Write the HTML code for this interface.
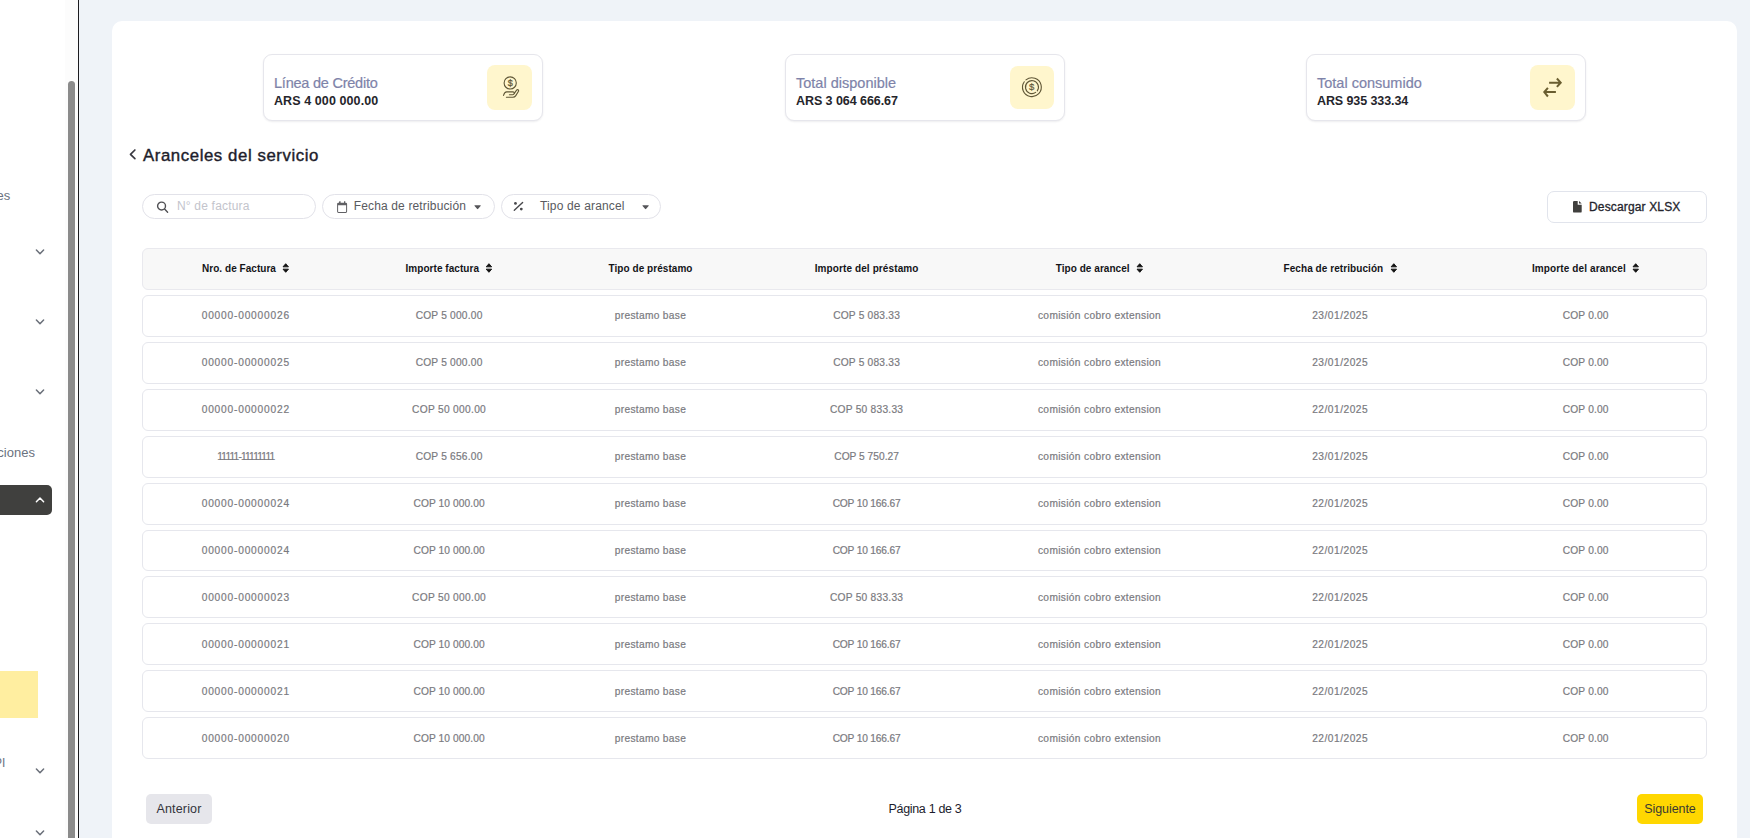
<!DOCTYPE html>
<html lang="es">
<head>
<meta charset="utf-8">
<title>Aranceles del servicio</title>
<style>
*{box-sizing:border-box;margin:0;padding:0}
html,body{width:1750px;height:838px;overflow:hidden}
body{background:#eff3f8;font-family:"Liberation Sans",sans-serif;position:relative;color:#222}
.abs{position:absolute}
/* sidebar */
#side{position:absolute;left:0;top:0;width:79px;height:838px;background:#fff;border-right:1px solid #1b1b1f;overflow:hidden}
#track{position:absolute;left:65px;top:0;width:13px;height:838px;background:#fcfcfc}
#thumb{position:absolute;left:68px;top:81px;width:7px;height:800px;border-radius:4px;background:#8b8b8b}
.nt{position:absolute;left:0;font-size:13px;color:#6b7280;white-space:nowrap;line-height:16px}
.chev{position:absolute;left:35px;width:10px;height:6px;fill:none;stroke:#6a6f79;stroke-width:1.5;stroke-linecap:round;stroke-linejoin:round;overflow:visible}
#dark{position:absolute;left:-6px;top:485px;width:58px;height:30px;border-radius:5px;background:#40403e}
#yellow{position:absolute;left:0;top:671px;width:38px;height:47px;background:#ffeea0}
/* main */
#panel{position:absolute;left:112px;top:21px;width:1625px;height:830px;background:#fff;border-radius:10px}
.card{position:absolute;top:54px;width:280px;height:67px;background:#fff;border:1px solid #e6e6ec;border-radius:9px;box-shadow:0 1px 2px rgba(20,20,50,.08)}
.card .lab{position:absolute;left:10px;top:18.8px;font-size:14.5px;line-height:18px;color:#7e83a9;white-space:nowrap;-webkit-text-stroke:.2px #7e83a9}
.card .val{position:absolute;left:10px;top:39px;font-size:12.5px;line-height:15px;font-weight:700;color:#25252b;white-space:nowrap}
.card .ib{position:absolute;left:223px;top:10px;width:45px;height:44.5px;border-radius:8px;background:#fff6cd}
.card svg{position:absolute;overflow:visible}
#title{position:absolute;left:143px;top:144.6px;font-size:16.8px;line-height:22px;color:#1d1d2b;white-space:nowrap;letter-spacing:.58px;-webkit-text-stroke:.4px #1d1d2b}
.pill{position:absolute;top:194px;height:25px;border:1px solid #e2e2e9;border-radius:13px;background:#fff}
.pill span{position:absolute;top:4px;font-size:12px;line-height:14px;white-space:nowrap;color:#595a60}
.pill svg{position:absolute;overflow:visible}
#dl{position:absolute;left:1547px;top:191px;width:160px;height:32px;border:1px solid #e1e4ec;border-radius:7px;background:#fff}
#dl span{position:absolute;left:41px;top:7.5px;font-size:12px;line-height:14px;color:#24242c;white-space:nowrap;letter-spacing:.15px;-webkit-text-stroke:.3px #24242c}
.tr{position:absolute;left:142px;width:1565px;height:42px;border:1px solid #e6e7ed;border-radius:6px;background:#fff}
.tr.h{background:#f8f8f8;border-color:#e9e9ee}
.c{position:absolute;top:0;height:39px;line-height:39px;text-align:center;white-space:nowrap;font-size:10.2px;color:#7a7a80;transform:translateX(-50%);-webkit-text-stroke:.2px #7a7a80}
.o1 .c{top:1px}
.h .c{font-size:10px;font-weight:700;color:#141418;-webkit-text-stroke:0}
.sort{display:inline-block;width:7px;height:10px;margin-left:6.6px;vertical-align:-1.3px;fill:#111;stroke:#111;stroke-width:.9;stroke-linejoin:round}
.c1{left:102.8px;letter-spacing:.8px}.c2{left:306.1px;letter-spacing:.21px}.c3{left:507.5px;letter-spacing:.3px}.c4{left:723.6px;letter-spacing:.21px}.c5{left:956.5px;letter-spacing:.34px}.c6{left:1197.2px;letter-spacing:.5px}.c7{left:1442.7px;letter-spacing:.18px}
.btn{position:absolute;top:794px;height:30px;border-radius:5px;font-size:12.5px;line-height:30px;text-align:center;white-space:nowrap}
</style>
</head>
<body>
<div id="side">
  <div id="track"></div><div id="thumb"></div>
  <div class="nt" style="top:188px;left:-42.5px">Reportes</div>
  <div class="nt" style="top:445px;left:-46px">Notificaciones</div>
  <div class="nt" style="top:755px;left:-14px;font-size:12px">API</div>
  <svg class="chev" style="top:249px" viewBox="0 0 10 6"><path d="M1.4 1 L5 4.7 L8.6 1"/></svg>
  <svg class="chev" style="top:319px" viewBox="0 0 10 6"><path d="M1.4 1 L5 4.7 L8.6 1"/></svg>
  <svg class="chev" style="top:389px" viewBox="0 0 10 6"><path d="M1.4 1 L5 4.7 L8.6 1"/></svg>
  <div id="dark"></div>
  <svg class="chev" style="top:496.5px;stroke:#fff" viewBox="0 0 10 6"><path d="M1.4 4.7 L5 1 L8.6 4.7"/></svg>
  <div id="yellow"></div>
  <svg class="chev" style="top:768px" viewBox="0 0 10 6"><path d="M1.4 1 L5 4.7 L8.6 1"/></svg>
  <svg class="chev" style="top:830px" viewBox="0 0 10 6"><path d="M1.4 1 L5 4.7 L8.6 1"/></svg>
</div>
<div id="panel"></div>
<div class="card" style="left:263px"><div class="lab" style="letter-spacing:-0.23px">Línea de Crédito</div><div class="val" style="letter-spacing:0.09px">ARS 4 000 000.00</div><div class="ib" style=""><svg width="45" height="45" viewBox="0 0 45 45" style="left:0;top:0" fill="none" stroke="#5f5636" stroke-width="1.1" stroke-linecap="round" stroke-linejoin="round"><circle cx="23.2" cy="17.95" r="6.1"/><text x="23.15" y="20.9" text-anchor="middle" font-family="Liberation Sans, sans-serif" font-size="9" fill="#5f5636" stroke="#5f5636" stroke-width=".25">$</text><path d="M16.5 30.4 Q17.6 26.9 19.6 26.9 L25.8 26.9 Q27.6 27.1 27.3 28.4 Q27 29.7 25.6 29.7 L22.4 29.7"/><path d="M19.4 32.3 L25.8 32.3 Q27.8 32.2 28.8 30.6 L31.5 26.3 Q31.9 25.2 31 24.7 Q30.2 24.4 29.6 25.2 L27.3 28.4"/></svg></div></div>
<div class="card" style="left:785px"><div class="lab" style="letter-spacing:0.01px">Total disponible</div><div class="val" style="letter-spacing:-0.06px">ARS 3 064 666.67</div><div class="ib" style="left:224px;top:10.7px;width:44.4px;height:43.6px"><svg width="45" height="45" viewBox="0 0 45 45" style="left:0;top:0" fill="none" stroke="#5f5636" stroke-width="1.1" stroke-linecap="round"><path d="M15.98 13.94 A9.4 9.4 0 1 1 14.3 15.72"/><path d="M25.68 26.42 A6.5 6.5 0 1 1 27.27 24.83"/><text x="21.75" y="24.2" text-anchor="middle" font-family="Liberation Sans, sans-serif" font-size="9.6" fill="#5f5636" stroke="#5f5636" stroke-width=".15">$</text></svg></div></div>
<div class="card" style="left:1306px"><div class="lab" style="letter-spacing:0px">Total consumido</div><div class="val" style="letter-spacing:-0.09px">ARS 935 333.34</div><div class="ib" style=""><svg width="45" height="45" viewBox="0 0 45 45" style="left:0;top:0" fill="none" stroke="#6a5e30" stroke-width="2" stroke-linejoin="miter"><path d="M19.1 17.7 L30 17.7 M26.9 13.5 L30.7 17.7 L26.9 21.9"/><path d="M25.9 27.1 L15 27.1 M17.9 22.9 L14.3 27.1 L17.9 31.5"/></svg></div></div>
<svg class="abs" style="left:129px;top:149.3px;overflow:visible" width="8" height="11" viewBox="0 0 8 11"><path d="M5.9 1 L1.5 5.3 L5.9 9.6" fill="none" stroke="#3a3a42" stroke-width="1.7" stroke-linecap="round" stroke-linejoin="round"/></svg>
<div id="title">Aranceles del servicio</div>
<div class="pill" style="left:142px;width:174px"><svg style="left:13px;top:5.5px" width="13" height="13" viewBox="0 0 13 13" fill="none" stroke="#505054" stroke-width="1.4" stroke-linecap="round"><circle cx="5.55" cy="5.05" r="3.95"/><path d="M8.6 8.1 L11.6 11.2"/></svg><span style="left:34px;color:#c3c4cc;letter-spacing:.19px">N° de factura</span></div>
<div class="pill" style="left:322px;width:173px"><svg style="left:14px;top:5.8px" width="11" height="13" viewBox="0 0 11 13"><path d="M2.3 0.2 h1.3 v1.5 h3.4 v-1.5 h1.3 v1.5 h0.5 a1.3 1.3 0 0 1 1.3 1.3 v7.6 a1.3 1.3 0 0 1 -1.3 1.3 h-7.4 a1.3 1.3 0 0 1 -1.3 -1.3 v-7.6 a1.3 1.3 0 0 1 1.3 -1.3 h0.5 z M1.1 4.3 v6.2 a0.4 0.4 0 0 0 0.4 0.4 h7.2 a0.4 0.4 0 0 0 0.4 -0.4 v-6.2 z" fill="#606064" fill-rule="evenodd"/></svg><svg style="left:151px;top:10px" width="8" height="5" viewBox="0 0 8 5"><path d="M0.9 0.2 h5.4 q0.9 0 0.3 0.75 l-2.4 2.9 q-0.6 0.6 -1.2 0 l-2.4 -2.9 q-0.6 -0.75 0.3 -0.75 z" fill="#555559"/></svg><span style="left:30.7px;letter-spacing:.15px">Fecha de retribución</span></div>
<div class="pill" style="left:501px;width:160px"><svg style="left:11px;top:5.4px" width="12" height="12" viewBox="0 0 12 12"><path d="M1.3 10.2 L9.6 2.4" stroke="#48484c" stroke-width="1.4" stroke-linecap="round"/><circle cx="2.45" cy="3.4" r="1.4" fill="#48484c"/><circle cx="8.3" cy="9.1" r="1.4" fill="#48484c"/></svg><svg style="left:139.8px;top:10px" width="8" height="5" viewBox="0 0 8 5"><path d="M0.9 0.2 h5.4 q0.9 0 0.3 0.75 l-2.4 2.9 q-0.6 0.6 -1.2 0 l-2.4 -2.9 q-0.6 -0.75 0.3 -0.75 z" fill="#555559"/></svg><span style="left:38px;letter-spacing:.16px">Tipo de arancel</span></div>
<div id="dl"><svg style="position:absolute;left:25.2px;top:9px;overflow:visible" width="9" height="12" viewBox="0 0 9 12"><path d="M1.2 0 H4.7 V3.7 H8.7 V10.4 A1.2 1.2 0 0 1 7.5 11.6 H1.2 A1.2 1.2 0 0 1 0 10.4 V1.2 A1.2 1.2 0 0 1 1.2 0 Z M6 0 L8.7 2.6 H6 Z" fill="#403f3d"/></svg><span>Descargar XLSX</span></div>
<div class="tr h" style="top:248px"><div class="c c1" style="letter-spacing:0.04px">Nro. de Factura<svg class="sort" viewBox="0 0 7 10"><path d="M3.5 0.7 L6.25 3.85 L0.75 3.85 Z M0.75 6.15 L6.25 6.15 L3.5 9.3 Z"/></svg></div><div class="c c2" style="letter-spacing:0.05px">Importe factura<svg class="sort" viewBox="0 0 7 10"><path d="M3.5 0.7 L6.25 3.85 L0.75 3.85 Z M0.75 6.15 L6.25 6.15 L3.5 9.3 Z"/></svg></div><div class="c c3" style="letter-spacing:0.05px">Tipo de préstamo</div><div class="c c4" style="letter-spacing:0.11px">Importe del préstamo</div><div class="c c5" style="letter-spacing:0.05px">Tipo de arancel<svg class="sort" viewBox="0 0 7 10"><path d="M3.5 0.7 L6.25 3.85 L0.75 3.85 Z M0.75 6.15 L6.25 6.15 L3.5 9.3 Z"/></svg></div><div class="c c6" style="letter-spacing:0.07px">Fecha de retribución<svg class="sort" viewBox="0 0 7 10"><path d="M3.5 0.7 L6.25 3.85 L0.75 3.85 Z M0.75 6.15 L6.25 6.15 L3.5 9.3 Z"/></svg></div><div class="c c7" style="letter-spacing:0.12px">Importe del arancel<svg class="sort" viewBox="0 0 7 10"><path d="M3.5 0.7 L6.25 3.85 L0.75 3.85 Z M0.75 6.15 L6.25 6.15 L3.5 9.3 Z"/></svg></div></div>
<div class="tr" style="top:295px;height:42px"><div class="c c1">00000-00000026</div><div class="c c2">COP 5 000.00</div><div class="c c3">prestamo base</div><div class="c c4">COP 5 083.33</div><div class="c c5">comisión cobro extension</div><div class="c c6">23/01/2025</div><div class="c c7">COP 0.00</div></div>
<div class="tr" style="top:342px;height:42px"><div class="c c1">00000-00000025</div><div class="c c2">COP 5 000.00</div><div class="c c3">prestamo base</div><div class="c c4">COP 5 083.33</div><div class="c c5">comisión cobro extension</div><div class="c c6">23/01/2025</div><div class="c c7">COP 0.00</div></div>
<div class="tr" style="top:389px;height:42px"><div class="c c1">00000-00000022</div><div class="c c2" style="letter-spacing:.3px">COP 50 000.00</div><div class="c c3">prestamo base</div><div class="c c4" style="letter-spacing:.25px">COP 50 833.33</div><div class="c c5">comisión cobro extension</div><div class="c c6">22/01/2025</div><div class="c c7">COP 0.00</div></div>
<div class="tr" style="top:436px;height:42px"><div class="c c1" style="letter-spacing:-.83px">11111-11111111</div><div class="c c2">COP 5 656.00</div><div class="c c3">prestamo base</div><div class="c c4" style="letter-spacing:.02px">COP 5 750.27</div><div class="c c5">comisión cobro extension</div><div class="c c6">23/01/2025</div><div class="c c7">COP 0.00</div></div>
<div class="tr" style="top:483px;height:42px"><div class="c c1">00000-00000024</div><div class="c c2" style="letter-spacing:.1px">COP 10 000.00</div><div class="c c3">prestamo base</div><div class="c c4" style="letter-spacing:-.17px">COP 10 166.67</div><div class="c c5">comisión cobro extension</div><div class="c c6">22/01/2025</div><div class="c c7">COP 0.00</div></div>
<div class="tr" style="top:530px;height:41px"><div class="c c1">00000-00000024</div><div class="c c2" style="letter-spacing:.1px">COP 10 000.00</div><div class="c c3">prestamo base</div><div class="c c4" style="letter-spacing:-.17px">COP 10 166.67</div><div class="c c5">comisión cobro extension</div><div class="c c6">22/01/2025</div><div class="c c7">COP 0.00</div></div>
<div class="tr o1" style="top:576px;height:42px"><div class="c c1">00000-00000023</div><div class="c c2" style="letter-spacing:.3px">COP 50 000.00</div><div class="c c3">prestamo base</div><div class="c c4" style="letter-spacing:.25px">COP 50 833.33</div><div class="c c5">comisión cobro extension</div><div class="c c6">22/01/2025</div><div class="c c7">COP 0.00</div></div>
<div class="tr o1" style="top:623px;height:42px"><div class="c c1">00000-00000021</div><div class="c c2" style="letter-spacing:.1px">COP 10 000.00</div><div class="c c3">prestamo base</div><div class="c c4" style="letter-spacing:-.17px">COP 10 166.67</div><div class="c c5">comisión cobro extension</div><div class="c c6">22/01/2025</div><div class="c c7">COP 0.00</div></div>
<div class="tr o1" style="top:670px;height:42px"><div class="c c1">00000-00000021</div><div class="c c2" style="letter-spacing:.1px">COP 10 000.00</div><div class="c c3">prestamo base</div><div class="c c4" style="letter-spacing:-.17px">COP 10 166.67</div><div class="c c5">comisión cobro extension</div><div class="c c6">22/01/2025</div><div class="c c7">COP 0.00</div></div>
<div class="tr o1" style="top:717px;height:42px"><div class="c c1">00000-00000020</div><div class="c c2" style="letter-spacing:.1px">COP 10 000.00</div><div class="c c3">prestamo base</div><div class="c c4" style="letter-spacing:-.17px">COP 10 166.67</div><div class="c c5">comisión cobro extension</div><div class="c c6">22/01/2025</div><div class="c c7">COP 0.00</div></div>
<div class="btn" style="left:146px;width:66px;background:#e6e6eb;color:#33333b;letter-spacing:.15px">Anterior</div>
<div class="btn" style="left:888px;width:74px;color:#1c1c2c;letter-spacing:-.32px">Página 1 de 3</div>
<div class="btn" style="left:1637px;width:66px;background:#ffd700;color:#3a3a33;letter-spacing:-.07px">Siguiente</div>
</body>
</html>
